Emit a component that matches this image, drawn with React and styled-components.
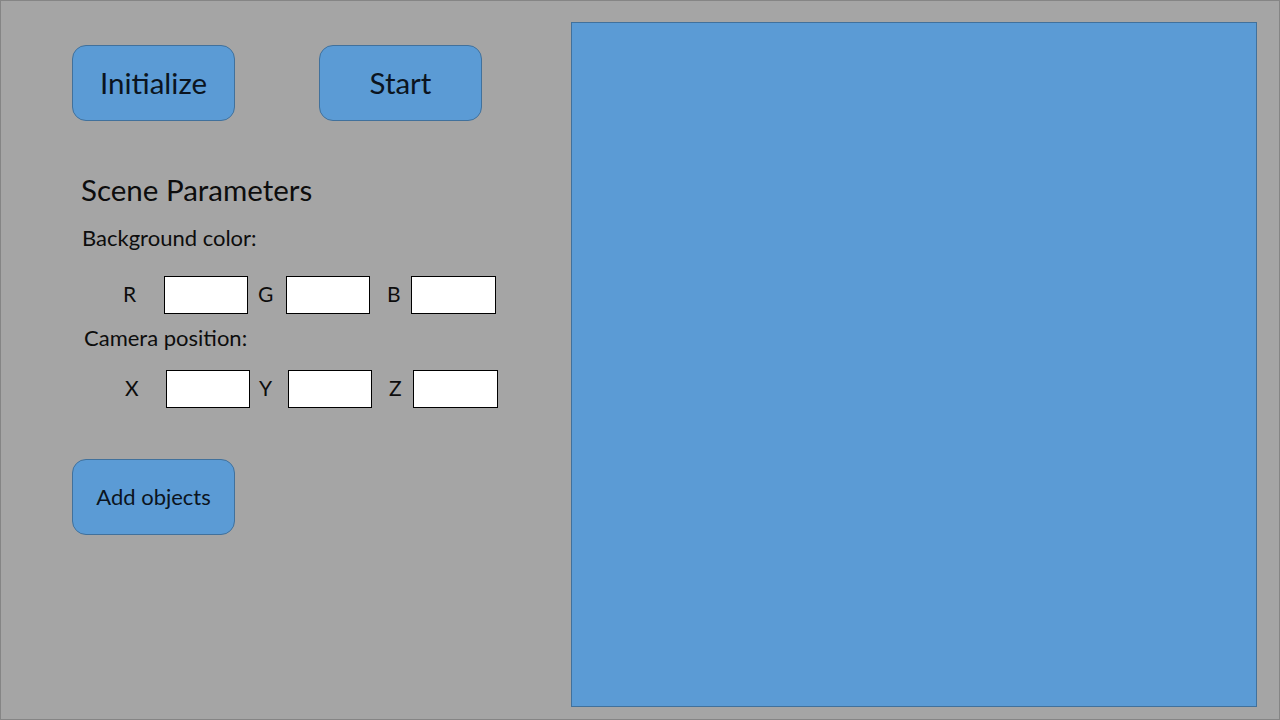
import React from "react";
import styled, { createGlobalStyle } from "styled-components";

const GlobalStyles = createGlobalStyle`
  html, body {
    margin: 0;
    padding: 0;
    background: #a5a5a5;
  }
  * {
    box-sizing: border-box;
  }
`;

const rgbFields = [
  { label: "R", pad: 0 },
  { label: "G", pad: 10 },
  { label: "B", pad: 17 },
];

const xyzFields = [
  { label: "X", pad: 0 },
  { label: "Y", pad: 9 },
  { label: "Z", pad: 17 },
];

function FieldRow({ fields, offset, top }) {
  return (
    <Row $offset={offset} $top={top}>
      {fields.map((f) => (
        <React.Fragment key={f.label}>
          <AxisLabel $pad={f.pad}>{f.label}</AxisLabel>
          <ValueBox type="text" />
        </React.Fragment>
      ))}
    </Row>
  );
}

function App() {
  return (
    <>
      <GlobalStyles />
      <Frame>
        <Controls>
          <ButtonRow>
            <Button>Initialize</Button>
            <Button>Start</Button>
          </ButtonRow>

          <Heading>Scene Parameters</Heading>

          <SubLabel $indent={10} $top={17}>
            Background color:
          </SubLabel>
          <FieldRow fields={rgbFields} offset={51} top={25} />

          <SubLabel $indent={12} $top={11}>
            Camera position:
          </SubLabel>
          <FieldRow fields={xyzFields} offset={53} top={19} />

          <Button $small>Add objects</Button>
        </Controls>
        <Canvas />
      </Frame>
    </>
  );
}

export default App;

const Frame = styled.div`
  width: 1280px;
  height: 720px;
  display: flex;
  align-items: flex-start;
  background: #a5a5a5;
  border: 1px solid #858585;
  font-family: Lato, "Open Sans", sans-serif;
  color: #0d0d0d;
`;

const Controls = styled.div`
  width: 570px;
  padding: 44px 0 0 71px;
  display: flex;
  flex-direction: column;
  align-items: flex-start;
`;

const ButtonRow = styled.div`
  display: flex;
  gap: 84px;
`;

const Button = styled.button`
  width: 163px;
  height: 76px;
  margin-top: ${(p) => (p.$small ? "51px" : "0")};
  border-radius: 14px;
  border: 1px solid #41719c;
  background: #5b9bd5;
  color: #0b1420;
  font-family: inherit;
  font-size: ${(p) => (p.$small ? "22px" : "29.5px")};
  padding: 0 0 2px;
  cursor: pointer;
`;

const Heading = styled.h1`
  margin: 51px 0 0 9px;
  font-size: 29.5px;
  line-height: 36px;
  font-weight: 400;
`;

const SubLabel = styled.div`
  margin: ${(p) => p.$top}px 0 0 ${(p) => p.$indent}px;
  font-size: 22px;
  line-height: 26px;
`;

const Row = styled.div`
  display: grid;
  grid-template-columns: 41px 84px 38px 84px 41px 85px;
  align-items: center;
  height: 38px;
  margin: ${(p) => p.$top}px 0 0 ${(p) => p.$offset}px;
`;

const AxisLabel = styled.span`
  padding: 0 0 3px ${(p) => p.$pad}px;
  font-size: 21px;
  line-height: 1;
`;

const ValueBox = styled.input`
  height: 38px;
  width: 100%;
  border: 1px solid #000;
  background: #fff;
  outline: none;
`;

const Canvas = styled.div`
  margin-top: 21px;
  width: 686px;
  height: 685px;
  background: #5b9bd5;
  border: 1px solid #41719c;
`;
